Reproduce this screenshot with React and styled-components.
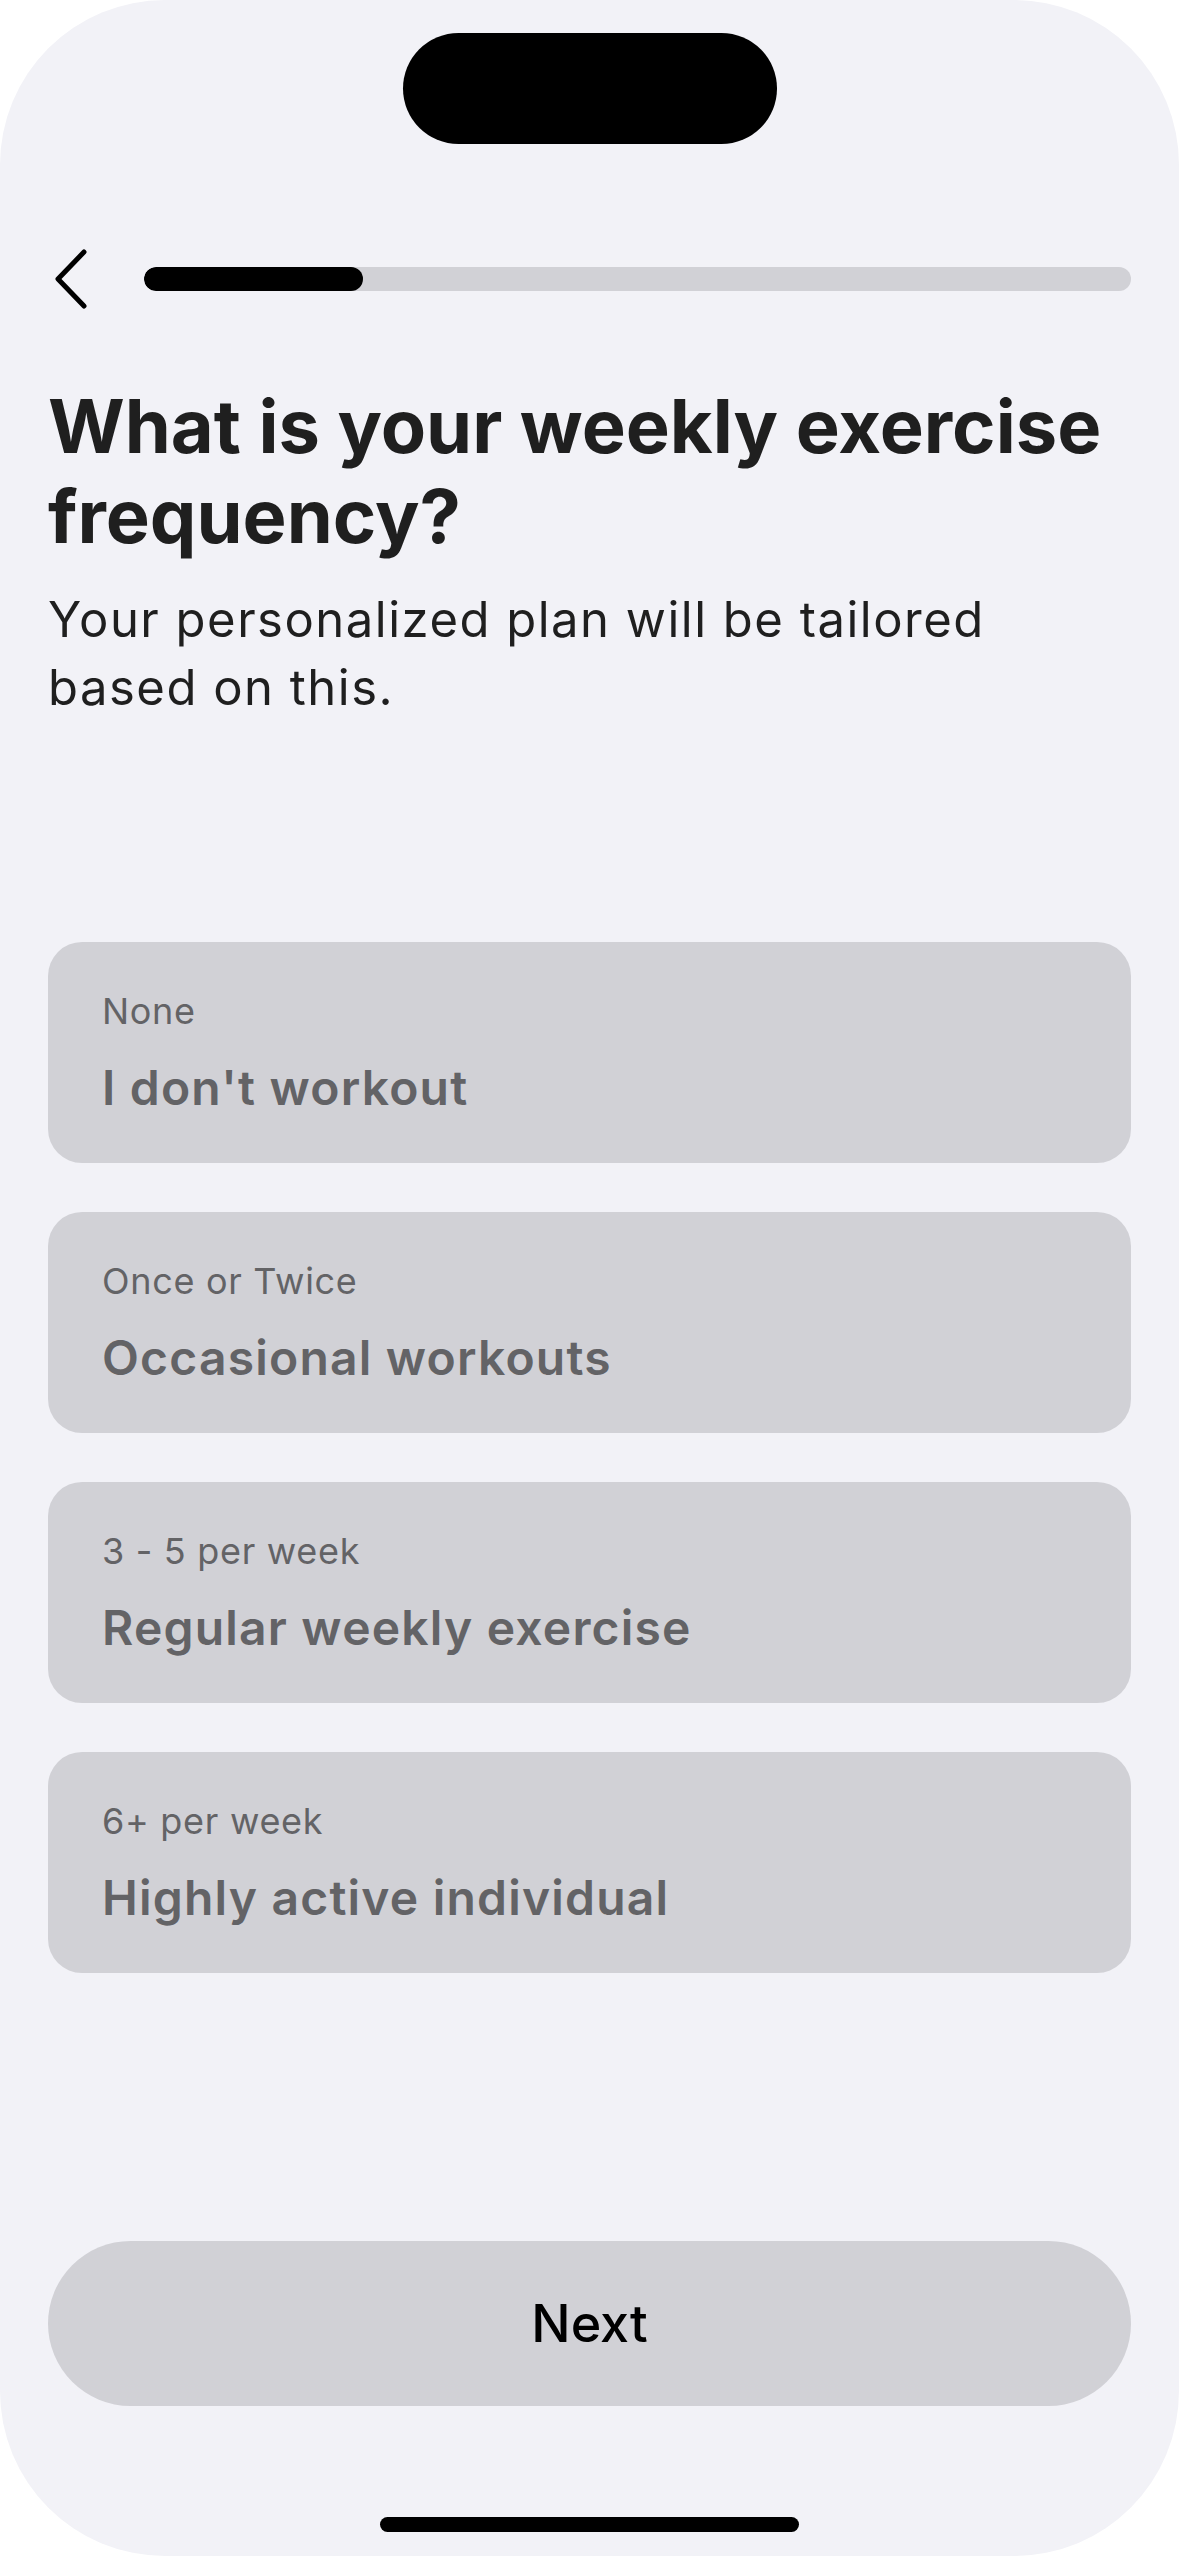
import styled, { createGlobalStyle } from "styled-components";

const GlobalStyle = createGlobalStyle`
  html, body {
    margin: 0;
    padding: 0;
    background: #ffffff;
  }
  * {
    box-sizing: border-box;
  }
`;

const options = [
  { sub: "None", title: "I don't workout" },
  { sub: "Once or Twice", title: "Occasional workouts" },
  { sub: "3 - 5 per week", title: "Regular weekly exercise" },
  { sub: "6+ per week", title: "Highly active individual" },
];

function App() {
  const progress = 0.222;

  return (
    <>
      <GlobalStyle />
      <Phone>
        <Island />

        <Header>
          <BackButton aria-label="Back">
            <svg width="40" height="60" viewBox="0 0 40 60">
              <polyline
                points="36,3 10,30 36,57"
                fill="none"
                stroke="#000"
                strokeWidth="5"
                strokeLinecap="round"
                strokeLinejoin="round"
              />
            </svg>
          </BackButton>
          <Track>
            <Fill style={{ width: `${progress * 100}%` }} />
          </Track>
        </Header>

        <Intro>
          <Title>What is your weekly exercise frequency?</Title>
          <Subtitle>Your personalized plan will be tailored based on this.</Subtitle>
        </Intro>

        <OptionList>
          {options.map((o) => (
            <Option key={o.title}>
              <OptionSub>{o.sub}</OptionSub>
              <OptionTitle>{o.title}</OptionTitle>
            </Option>
          ))}
        </OptionList>

        <Spacer />

        <NextButton>Next</NextButton>
        <HomeBar />
      </Phone>
    </>
  );
}

const Phone = styled.div`
  width: 1179px;
  height: 2556px;
  background: #f2f2f7;
  border-radius: 165px;
  overflow: hidden;
  display: flex;
  flex-direction: column;
  font-family: Inter, "Noto Sans", sans-serif;
`;

const Island = styled.div`
  align-self: center;
  margin-top: 33px;
  width: 374px;
  height: 111px;
  border-radius: 56px;
  background: #000;
  flex-shrink: 0;
`;

const Header = styled.div`
  display: flex;
  align-items: center;
  margin-top: 106px;
  padding: 0 48px;
  height: 57px;
  flex-shrink: 0;
`;

const BackButton = styled.button`
  border: 0;
  background: none;
  padding: 0;
  margin: 0;
  width: 40px;
  height: 60px;
  display: flex;
  align-items: center;
  justify-content: center;
`;

const Track = styled.div`
  flex: 1;
  margin-left: 56px;
  height: 24px;
  border-radius: 12px;
  background: #d1d1d6;
  overflow: hidden;
`;

const Fill = styled.div`
  height: 100%;
  background: #000;
  border-radius: 12px;
`;

const Intro = styled.div`
  padding: 0 48px;
  margin-top: 74px;
  display: flex;
  flex-direction: column;
  gap: 25px;
`;

const Title = styled.h1`
  margin: 0;
  font-size: 74px;
  line-height: 90px;
  font-weight: 700;
  color: #1f1f1f;
`;

const Subtitle = styled.p`
  margin: 0;
  max-width: 1000px;
  font-size: 49px;
  line-height: 68px;
  font-weight: 400;
  letter-spacing: 1.5px;
  color: #1f1f1f;
`;

const OptionList = styled.div`
  margin-top: 220px;
  padding: 0 48px;
  display: flex;
  flex-direction: column;
  gap: 49px;
`;

const Option = styled.div`
  height: 221px;
  border-radius: 34px;
  background: #d1d1d6;
  padding: 0 54px;
  display: flex;
  flex-direction: column;
  justify-content: center;
  gap: 27px;
`;

const OptionSub = styled.div`
  font-size: 36px;
  line-height: 44px;
  font-weight: 400;
  letter-spacing: 0.7px;
  color: #636366;
`;

const OptionTitle = styled.div`
  font-size: 48px;
  line-height: 56px;
  font-weight: 600;
  letter-spacing: 1.2px;
  color: #636366;
`;

const Spacer = styled.div`
  flex: 1;
`;

const NextButton = styled.button`
  margin: 0 48px;
  height: 165px;
  border: 0;
  border-radius: 83px;
  background: #d1d1d6;
  color: #000;
  font-family: Inter, "Noto Sans", sans-serif;
  font-size: 52px;
  font-weight: 500;
  flex-shrink: 0;
`;

const HomeBar = styled.div`
  align-self: center;
  margin-top: 111px;
  margin-bottom: 24px;
  width: 419px;
  height: 15px;
  border-radius: 8px;
  background: #000;
  flex-shrink: 0;
`;

export default App;
